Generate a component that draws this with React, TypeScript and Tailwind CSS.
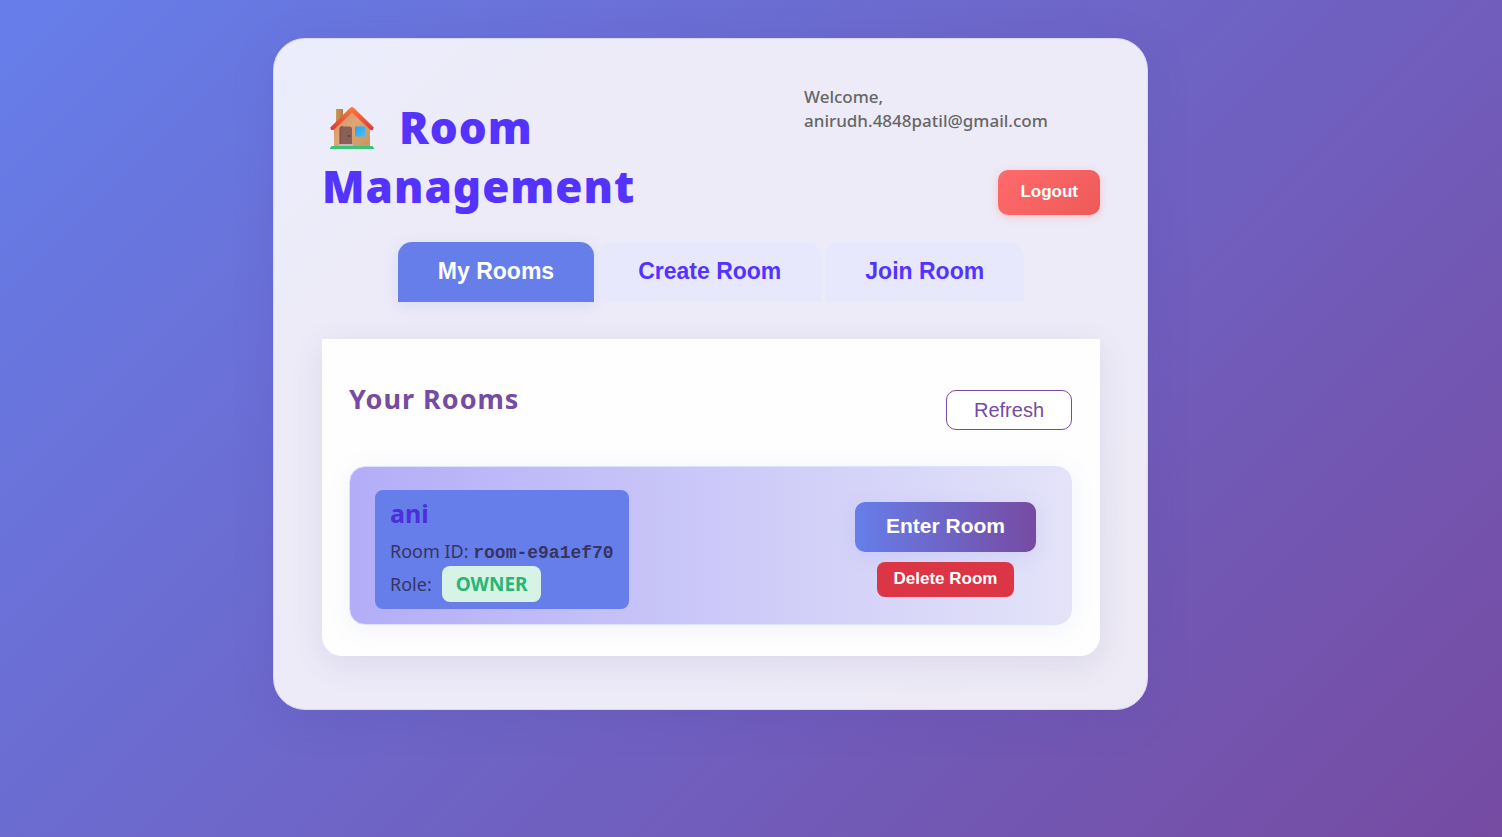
import React, { useState } from "react";

const TABS = ["My Rooms", "Create Room", "Join Room"];

function HouseIcon() {
  return (
    <svg
      viewBox="0 0 46 44"
      className="ml-[7px] mr-6 inline-block h-11 w-[46px] align-[-6px]"
      role="img"
      aria-label="House"
    >
      <defs>
        <linearGradient id="wall" x1="0" x2="1" y1="0" y2="1">
          <stop offset="0" stopColor="#c98f5c" />
          <stop offset="0.45" stopColor="#e0a577" />
          <stop offset="1" stopColor="#c79660" />
        </linearGradient>
        <linearGradient id="chimney" x1="0" x2="1">
          <stop offset="0" stopColor="#c99a5c" />
          <stop offset="1" stopColor="#b07d47" />
        </linearGradient>
        <linearGradient id="roof" x1="0" x2="0" y1="0" y2="1">
          <stop offset="0" stopColor="#ff7a3c" />
          <stop offset="1" stopColor="#dc3a35" />
        </linearGradient>
        <linearGradient id="pane" x1="0" x2="1" y1="0" y2="1">
          <stop offset="0" stopColor="#2f9df0" />
          <stop offset="1" stopColor="#41c4ff" />
        </linearGradient>
      </defs>
      <rect x="7" y="3" width="7" height="16" fill="url(#chimney)" />
      <path d="M5 21 L23 4 L41 21 V40 H5 Z" fill="url(#wall)" />
      <path
        d="M1.2 21.5 L21 2 Q23 0.2 25 2 L44.800 21.5 L44 24 H41.5 L23 6.500 L4.5 24 H2 Z"
        fill="url(#roof)"
      />
      <path d="M11 39 V23 Q11 20.5 13.5 20.5 H20.5 Q23 20.5 23 23 V39 Z" fill="#8a5f58" />
      <path d="M11 39 V23 Q11 20.5 13.5 20.5" fill="none" stroke="#6f443d" />
      <circle cx="20" cy="30" r="0.9" fill="#5a332f" />
      <rect x="10" y="38" width="14" height="2" fill="#c9b5b4" />
      <rect x="26" y="20.5" width="10.5" height="10" rx="1.2" fill="url(#pane)" />
      <path d="M2.5 40 H43.5 L45.5 43 H0.5 Z" fill="#3cc37a" />
    </svg>
  );
}

function RoomCard() {
  return (
    <article className="mt-9 flex items-center justify-between rounded-2xl border border-[#dde3fb] bg-[linear-gradient(90deg,#b3adf7,#e4e3f9)] pt-[23px] pr-[35px] pb-[15px] pl-[25px] shadow-[0_4px_24px_rgba(102,126,234,0.09)]">
      <div className="rounded-lg bg-[#667eea] px-[15px] py-[7px] text-lg leading-6 text-[#37345f]">
        <h3 className="text-[25px] leading-8 font-bold text-[#4a2fdb]">ani</h3>
        <p className="mt-[10px]">
          Room ID:{" "}
          <code className="font-['Liberation_Mono',monospace] text-[18px] leading-none font-bold">
            room-e9a1ef70
          </code>
        </p>
        <p className="mt-[3px] flex items-center gap-[10px]">
          Role:
          <span className="rounded-lg bg-[#d7f3e5] px-[14px] py-[6px] text-[19px] leading-6 font-bold text-[#27b578]">
            OWNER
          </span>
        </p>
      </div>
      <div className="flex flex-col items-center gap-[10px] font-['Liberation_Sans',sans-serif] font-bold text-white">
        <button
          type="button"
          className="h-[50px] rounded-[10px] bg-[linear-gradient(90deg,#667eea,#764ba2)] px-[31px] pb-[2px] text-[21px] shadow-[0_4px_20px_rgba(102,126,234,0.13)]"
        >
          Enter Room
        </button>
        <button
          type="button"
          className="h-[35px] rounded-lg bg-[#dc3545] px-[17px] pb-[2px] text-[17px]"
        >
          Delete Room
        </button>
      </div>
    </article>
  );
}

export default function App() {
  const [active, setActive] = useState(TABS[0]);

  return (
    <div className="min-h-screen bg-[linear-gradient(135deg,#667eea,#764ba2)] px-4 py-[38px] font-['Noto_Sans',sans-serif] lg:pr-[97px]">
      <main className="mx-auto max-w-[875px] rounded-[32px] border border-[#d9d9f5] bg-[linear-gradient(135deg,#ebeefd,#edebf8_20%,#edebf8_70%,#eeeaf5)] pt-[45px] pr-[47px] pb-[53px] pl-12 shadow-[0_8px_40px_rgba(80,70,170,0.2)]">
        <header className="flex items-center justify-between gap-8">
          <h1 className="mt-[14px] flex-1 text-[44px] leading-[59px] font-black tracking-[1px] text-[#5433ff]">
            <HouseIcon />
            Room
            <br />
            Management
          </h1>
          <div className="flex w-[296px] flex-col">
            <p className="text-[17px] leading-6 font-medium text-[#666]">
              Welcome,
              <br />
              anirudh.4848patil@gmail.com
            </p>
            <button
              type="button"
              className="mt-[37px] h-[45px] self-end rounded-[10px] bg-[linear-gradient(135deg,#ff6b6b,#ee5a5a)] px-[22px] pb-[2px] font-['Liberation_Sans',sans-serif] text-[17px] font-bold text-white shadow-[0_2px_8px_rgba(255,107,107,0.3)]"
            >
              Logout
            </button>
          </div>
        </header>

        <nav className="mt-[26px] flex justify-center gap-1">
          {TABS.map((tab) => (
            <button
              key={tab}
              type="button"
              onClick={() => setActive(tab)}
              className={
                "h-[60px] rounded-t-[14px] px-10 pb-[2px] font-['Liberation_Sans',sans-serif] text-[23px] font-bold " +
                (tab === active
                  ? "bg-[#667eea] text-white shadow-[0_4px_16px_rgba(102,126,234,0.15)]"
                  : "bg-[#e8e8fd] text-[#5433ff]")
              }
            >
              {tab}
            </button>
          ))}
        </nav>

        <section className="mt-[37px] rounded-b-[20px] bg-[#fefefe] pt-[40px] pr-7 pb-[31px] pl-[27px] shadow-[0_8px_32px_rgba(90,80,160,0.12)]">
          <div className="flex items-start justify-between">
            <h2 className="text-[27px] leading-10 font-bold tracking-[1px] text-[#764ba2]">
              Your Rooms
            </h2>
            <button
              type="button"
              className="mt-[11px] h-10 rounded-[10px] border border-[#764ba2] bg-white px-[27px] font-['Liberation_Sans',sans-serif] text-[20px] text-[#764ba2]"
            >
              Refresh
            </button>
          </div>
          <RoomCard />
        </section>
      </main>
    </div>
  );
}
